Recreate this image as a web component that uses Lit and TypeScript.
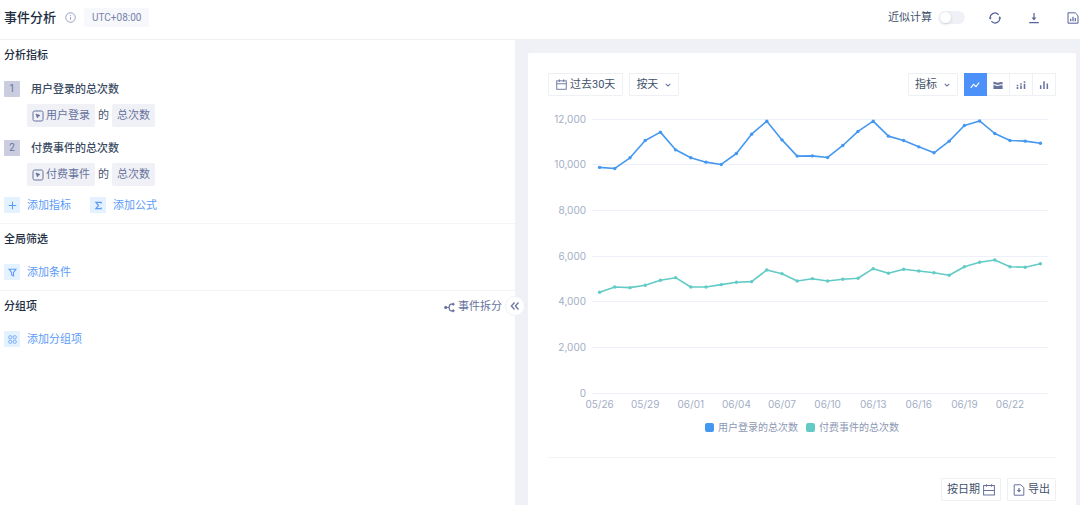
import { LitElement, html, svg, css } from "lit";
import { customElement, property, state } from "lit/decorators.js";
import { classMap } from "lit/directives/class-map.js";

interface Series {
  name: string;
  color: string;
  values: number[];
}

const SERIES: Series[] = [
  {
    name: "用户登录的总次数",
    color: "#4598f0",
    values: [
      9880, 9835, 10300, 11060, 11425, 10650, 10300, 10110, 10010, 10490, 11335, 11905, 11085, 10375, 10385,
      10315, 10840, 11455, 11905, 11250, 11060, 10780, 10520, 11030, 11715, 11915, 11365, 11060, 11030, 10940,
    ],
  },
  {
    name: "付费事件的总次数",
    color: "#62cbc5",
    values: [
      4412, 4644, 4614, 4718, 4937, 5051, 4644, 4644, 4745, 4850, 4876, 5388, 5226, 4907, 5007,
      4907, 4981, 5025, 5444, 5243, 5418, 5344, 5269, 5156, 5532, 5724, 5825, 5532, 5506, 5663,
    ],
  },
];

const DAYS = [
  "05/26", "05/27", "05/28", "05/29", "05/30", "05/31", "06/01", "06/02", "06/03", "06/04",
  "06/05", "06/06", "06/07", "06/08", "06/09", "06/10", "06/11", "06/12", "06/13", "06/14",
  "06/15", "06/16", "06/17", "06/18", "06/19", "06/20", "06/21", "06/22", "06/23", "06/24",
];

const icon = (size: number, body: unknown) =>
  html`<svg class="icon" width=${size} height=${size} viewBox="0 0 12 12" fill="none" stroke="currentColor" aria-hidden="true">${body}</svg>`;

const icons = {
  info: svg`<circle cx="6" cy="6" r="5.2"/><path d="M6 5.2v3.3M6 3.2v1.1"/>`,
  refresh: svg`<path d="M1.3 7.2A4.8 4.8 0 0 1 9.6 2.8M10.7 4.8A4.8 4.8 0 0 1 2.4 9.2" stroke-width="1.2"/><path d="M.1 5.6h2.6L1.3 7.8zM9.4 6.4H12L10.6 4.2z" fill="currentColor" stroke="none"/>`,
  download: svg`<path d="M6 1v6M1.2 10.6h9.6" stroke-width="1.2"/><path d="M3.7 5.6h4.6L6 8.4z" fill="currentColor" stroke="none"/>`,
  report: svg`<path d="M1 .8h7.2L11 3.6v7.6H1z"/><path d="M3.7 6.8v2.4M6 4.8v4.4M8.3 6v3.2" stroke-width="1.2"/>`,
  event: svg`<rect x="1" y="1" width="10" height="10" rx="1.6"/><path d="M4 4l4 1.500-1.800.700-.700 1.800z" fill="currentColor" stroke-width=".8"/>`,
  plus: svg`<path d="M6 1v10M1 6h10" stroke-width="1.4"/>`,
  sigma: svg`<path d="M9.6 3.4V1.8H2.6L6 6l-3.400 4.200h7V8.600" stroke-width="1.700"/>`,
  filter: svg`<path d="M1.400 1.600h9.200L7.400 6v4.600L4.800 9.200V6z" stroke-width="1.400"/>`,
  group: svg`<rect x="1" y="1" width="4" height="4" rx="1.200"/><rect x="7" y="1" width="4" height="4" rx="1.200"/><rect x="1" y="7" width="4" height="4" rx="1.200"/><rect x="7" y="7" width="4" height="4" rx="1.200"/>`,
  split: svg`<circle cx="1.900" cy="6" r="1.300" fill="currentColor"/><path d="M3 6h2.600M9 2.400H8C6.400 2.400 5.600 4 5.600 6s.8 3.600 2.400 3.600h1" stroke-width="1.300"/><circle cx="10" cy="2.400" r="1.100" fill="currentColor"/><circle cx="10" cy="9.600" r="1.100" fill="currentColor"/>`,
  collapse: svg`<path d="M5.400 1.800L1.600 6l3.800 4.200M10.200 1.800L6.400 6l3.800 4.200" stroke-width="1.500"/>`,
  calendar: svg`<rect x=".8" y="2" width="10.4" height="9.2"/><path d="M.8 5.2h10.4M3.6.4v3M8.4.4v3"/>`,
  chevron: svg`<path d="M2.6 4.4L6 7.6l3.4-3.2" stroke-width="1.7"/>`,
  dates: svg`<rect x=".6" y="1.5" width="10.8" height="9.5"/><path d="M.6 6.5h10.8M3.4.2v2.6M8.6.2v2.6"/>`,
  exportFile: svg`<path d="M1.2.8h6.6l3 2.8v7.6H1.2z"/><path d="M6 4v3" stroke-width="1.2"/><path d="M3.8 6h4.4L6 8.6z" fill="currentColor" stroke="none"/>`,
  line: svg`<path d="M1 9.400l3.200-4.200 3 2.800 3.800-5" stroke-width="1.400"/>`,
  area: svg`<path d="M.5 2.400c2.200-.9 3.400 1.300 5.500.9 1.900-.4 3.300-1.200 5.500-.6v2.600c-2.200-.7-3.600.5-5.500.6-2.100.1-3.300-1.300-5.500-.7zM.5 6.400c2.200-.6 3.400 1 5.500.8 1.900-.2 3.300-1.200 5.500-.6v4.200H.5z" fill="currentColor" stroke="none"/>`,
  stack: svg`<path d="M1.800 5.600v1.600M1.800 8.200v2.600M6 4v1.600M6 6.600v4.200M10.200 1.600v1.800M10.200 4.600v6.200" stroke-width="1.900"/>`,
  bars: svg`<path d="M2 6.400v4.400M6 1.400v9.400M10 4.200v6.600" stroke-width="1.800"/>`,
};

const shared = css`
  * {
    box-sizing: border-box;
  }
  button,
  select {
    font: inherit;
    color: inherit;
    margin: 0;
    padding: 0;
    border: 0;
    background: none;
    cursor: pointer;
  }
  .icon {
    display: block;
    flex: none;
  }
`;

@customElement("trend-chart")
export class TrendChart extends LitElement {
  @property({ attribute: false }) series: Series[] = [];
  @property({ attribute: false }) days: string[] = [];

  static styles = css`
    :host {
      display: block;
      font-family: Inter, "Noto Sans CJK SC", sans-serif;
      font-size: 10px;
    }
    .plot {
      display: block;
      margin: 0 8px 0 44px;
    }
    .canvas {
      display: block;
      width: 100%;
      height: 296px;
      overflow: visible;
    }
    .grid {
      stroke: #edf0f9;
      stroke-width: 1px;
    }
    .label {
      fill: #a3aec5;
    }
    .end {
      text-anchor: end;
    }
    .mid {
      text-anchor: middle;
    }
    .trend {
      fill: none;
      stroke-width: 1.6px;
      vector-effect: non-scaling-stroke;
      stroke-linejoin: round;
    }
    .legend {
      display: flex;
      justify-content: center;
      gap: 8px;
      margin: 4px 0 0;
      padding: 0;
      list-style: none;
      line-height: 16px;
      color: #8d98b3;
    }
    .entry {
      display: flex;
      align-items: center;
      gap: 4px;
    }
    .swatch {
      width: 9px;
      height: 9px;
      border-radius: 2px;
    }
  `;

  private readonly max = 12000;
  private readonly plotHeight = 274;

  private y(value: number) {
    return this.plotHeight * (1 - value / this.max);
  }

  render() {
    const count = this.days.length;
    const x = (i: number) => ((i + 0.5) / count) * 100;
    const ticks = [0, 2000, 4000, 6000, 8000, 10000, 12000];
    return html`
      <div class="plot">
        <svg class="canvas" role="img" aria-label="事件趋势">
          ${ticks.map(
            (t) => svg`
              <line class="grid" x1="0" x2="100%" y1=${Math.floor(this.y(t)) + 0.5} y2=${Math.floor(this.y(t)) + 0.5}></line>
              <text class="label end" x="-6" y=${Math.floor(this.y(t)) + 4}>${t.toLocaleString("en-US")}</text>`
          )}
          ${this.days.map((d, i) =>
            i % 3 === 0 && i < count - 1
              ? svg`<text class="label mid" x=${`${x(i)}%`} y="289">${d}</text>`
              : null
          )}
          ${this.series.map(
            (s) => svg`
              <svg width="100%" height=${this.plotHeight} viewBox=${`0 0 100 ${this.plotHeight}`} preserveAspectRatio="none">
                <polyline class="trend" stroke=${s.color} points=${s.values.map((v, i) => `${x(i)},${this.y(v)}`).join(" ")}></polyline>
              </svg>
              ${s.values.map((v, i) => svg`<circle cx=${`${x(i)}%`} cy=${this.y(v)} r="1.7" fill=${s.color}></circle>`)}`
          )}
        </svg>
      </div>
      <ul class="legend">
        ${this.series.map(
          (s) => html`<li class="entry"><span class="swatch" style="background:${s.color}"></span>${s.name}</li>`
        )}
      </ul>
    `;
  }
}

@customElement("metric-panel")
export class MetricPanel extends LitElement {
  static styles = [
    shared,
    css`
      :host {
        display: block;
        position: relative;
        background: #fff;
      }
      .section {
        padding: 8px 4px 10px;
        border-bottom: 1px solid #f3f4f7;
      }
      .section:last-of-type {
        border-bottom: 0;
      }
      .head {
        display: flex;
        justify-content: space-between;
        align-items: center;
        height: 16px;
        margin-bottom: 16px;
        padding-right: 9px;
      }
      .title {
        margin: 0;
        font-size: 11px;
        font-weight: 500;
        color: #202d3f;
      }
      .split {
        display: flex;
        align-items: center;
        gap: 3px;
        color: #67729d;
      }
      .metrics {
        display: grid;
        gap: 13px;
        padding: 1px 0 11px;
      }
      .name {
        display: flex;
        align-items: center;
        gap: 11px;
        height: 16px;
        margin-bottom: 7px;
        color: #3a4b63;
        font-weight: 500;
      }
      .index {
        width: 16px;
        border-radius: 1px;
        background: #c9cddf;
        color: #67729d;
        font-size: 10px;
        font-weight: 400;
        line-height: 16px;
        text-align: center;
      }
      .rule {
        display: flex;
        align-items: center;
        gap: 3px;
        padding-left: 23px;
        color: #42526b;
      }
      .chip {
        display: flex;
        align-items: center;
        gap: 2px;
        height: 23px;
        padding: 0 5px;
        border-radius: 2px;
        background: #f0f1f6;
        color: #67729d;
      }
      .actions {
        display: flex;
        gap: 19px;
        height: 16px;
      }
      .add {
        display: flex;
        align-items: center;
        gap: 7px;
        height: 16px;
        color: #5b9bf8;
      }
      .caption {
        padding-top: 2px;
      }
      .tile {
        display: grid;
        place-items: center;
        width: 16px;
        height: 16px;
        border-radius: 1px;
        background: #e4f1fe;
      }
      .collapse {
        position: absolute;
        z-index: 1;
        right: -10px;
        top: 256px;
        display: grid;
        place-items: center;
        width: 20px;
        height: 20px;
        border: 1px solid #f0f1f6;
        border-radius: 50%;
        background: #fff;
        color: #67729d;
      }
    `,
  ];

  private metric(index: number, event: string) {
    return html`
      <div>
        <div class="name"><span class="index">${index}</span><span class="caption">${event}的总次数</span></div>
        <div class="rule">
          <button class="chip">${icon(12, icons.event)}${event}</button>
          <span>的</span>
          <button class="chip">总次数</button>
        </div>
      </div>
    `;
  }

  private add(glyph: unknown, label: string) {
    return html`<button class="add">
      <span class="tile">${icon(9, glyph)}</span><span class="caption">${label}</span>
    </button>`;
  }

  render() {
    return html`
      <section class="section">
        <div class="head"><h2 class="title">分析指标</h2></div>
        <div class="metrics">${this.metric(1, "用户登录")} ${this.metric(2, "付费事件")}</div>
        <div class="actions">${this.add(icons.plus, "添加指标")} ${this.add(icons.sigma, "添加公式")}</div>
      </section>
      <section class="section">
        <div class="head"><h2 class="title">全局筛选</h2></div>
        <div class="actions">${this.add(icons.filter, "添加条件")}</div>
      </section>
      <section class="section">
        <div class="head">
          <h2 class="title">分组项</h2>
          <button class="split">${icon(11, icons.split)}事件拆分</button>
        </div>
        <div class="actions">${this.add(icons.group, "添加分组项")}</div>
      </section>
      <button class="collapse" aria-label="收起">${icon(10, icons.collapse)}</button>
    `;
  }
}

@customElement("app-root")
export class AppRoot extends LitElement {
  @state() private view = 0;

  static styles = [
    shared,
    css`
      :host {
        display: flex;
        flex-direction: column;
        min-height: 100vh;
        background: #f0f1f6;
        font-family: Roboto, "Noto Sans CJK SC", sans-serif;
        font-size: 11px;
        line-height: 16px;
        color: #42526b;
      }
      .bar {
        display: flex;
        align-items: center;
        height: 40px;
        padding: 0 1px 4px 4px;
        border-bottom: 1px solid #eeeff3;
        background: #fff;
      }
      .heading {
        margin: 0 9px 0 0;
        font-size: 13px;
        font-weight: 500;
        color: #202d3f;
      }
      .info {
        color: #8d98c0;
      }
      .zone {
        margin-left: 8px;
        padding: 0 8px;
        border-radius: 2px;
        background: #f6f8fb;
        color: #7782a8;
        font-size: 10px;
        line-height: 19px;
      }
      .approx {
        display: flex;
        align-items: center;
        gap: 7px;
        margin-left: auto;
      }
      .switch {
        appearance: none;
        width: 26px;
        height: 13px;
        margin: 0;
        border-radius: 7px;
        background: #f0f1f6;
        cursor: pointer;
      }
      .switch::before {
        content: "";
        display: block;
        width: 11px;
        height: 11px;
        margin: 1px;
        border-radius: 50%;
        background: #fff;
        box-shadow: 0 1px 3px #8a93a866;
      }
      .switch:checked {
        background: #4c90f9;
      }
      .switch:checked::before {
        margin-left: 14px;
      }
      .tools {
        display: flex;
        gap: 27px;
        margin-left: 24px;
        color: #56639a;
      }
      .body {
        flex: 1;
        display: grid;
        grid-template-columns: 515fr 565fr;
      }
      .main {
        display: flex;
        padding: 13px 4px 0 13px;
      }
      .card {
        flex: 1;
        min-width: 0;
        padding: 20px 20px 4px;
        border-radius: 2px 2px 0 0;
        background: #fff;
      }
      .row {
        display: flex;
        align-items: center;
        gap: 6px;
      }
      .push {
        margin-left: auto;
      }
      .box {
        display: flex;
        align-items: center;
        gap: 3px;
        height: 23px;
        padding: 0 7px;
        border: 1px solid #eef0f4;
        border-radius: 1px;
        background: #fff;
      }
      .box .icon {
        color: #67729d;
      }
      .drop {
        display: grid;
        align-items: center;
        height: 23px;
        border: 1px solid #eef0f4;
        border-radius: 1px;
      }
      .drop .pick {
        grid-area: 1 / 1;
        appearance: none;
        width: 100%;
        height: 21px;
        padding: 0 20px 0 6px;
      }
      .drop .icon {
        grid-area: 1 / 1;
        justify-self: end;
        margin-right: 6px;
        color: #67729d;
        pointer-events: none;
      }
      .views {
        display: flex;
      }
      .view {
        display: grid;
        place-items: center;
        width: 23px;
        height: 23px;
        border: 1px solid #eef0f4;
        border-left-width: 0;
        color: #67729d;
      }
      .view.on {
        border-color: #4c90f9;
        background: #4c90f9;
        color: #fff;
      }
      .chart {
        margin: 23px 0 22px;
      }
      .foot {
        justify-content: flex-end;
        padding-top: 20px;
        border-top: 1px solid #f3f4f7;
      }
      .foot .box {
        padding: 0 5px;
      }
    `,
  ];

  private drop(label: string, options: string[]) {
    return html`<label class="drop">
      <select class="pick" aria-label=${label}>
        ${options.map((o) => html`<option>${o}</option>`)}
      </select>
      ${icon(8, icons.chevron)}
    </label>`;
  }

  render() {
    const views = [
      { label: "折线图", glyph: icons.line },
      { label: "面积图", glyph: icons.area },
      { label: "堆积图", glyph: icons.stack },
      { label: "柱状图", glyph: icons.bars },
    ];
    return html`
      <header class="bar">
        <h1 class="heading">事件分析</h1>
        <button class="info" aria-label="说明">${icon(11, icons.info)}</button>
        <span class="zone">UTC+08:00</span>
        <label class="approx">近似计算<input class="switch" type="checkbox" role="switch" /></label>
        <div class="tools">
          <button aria-label="刷新">${icon(12, icons.refresh)}</button>
          <button aria-label="下载">${icon(12, icons.download)}</button>
          <button aria-label="报表">${icon(12, icons.report)}</button>
        </div>
      </header>
      <div class="body">
        <metric-panel></metric-panel>
        <main class="main">
          <div class="card">
            <div class="row">
              <button class="box">${icon(11, icons.calendar)}过去30天</button>
              ${this.drop("粒度", ["按天"])}
              <span class="push"></span>
              ${this.drop("展示", ["指标"])}
              <div class="views" role="group" aria-label="图表类型">
                ${views.map(
                  (v, i) => html`<button
                    class=${classMap({ view: true, on: i === this.view })}
                    aria-label=${v.label}
                    aria-pressed=${i === this.view}
                    @click=${() => (this.view = i)}
                  >
                    ${icon(10, v.glyph)}
                  </button>`
                )}
              </div>
            </div>
            <trend-chart class="chart" .series=${SERIES} .days=${DAYS}></trend-chart>
            <div class="row foot">
              <button class="box">按日期${icon(12, icons.dates)}</button>
              <button class="box">${icon(12, icons.exportFile)}导出</button>
            </div>
          </div>
        </main>
      </div>
    `;
  }
}
